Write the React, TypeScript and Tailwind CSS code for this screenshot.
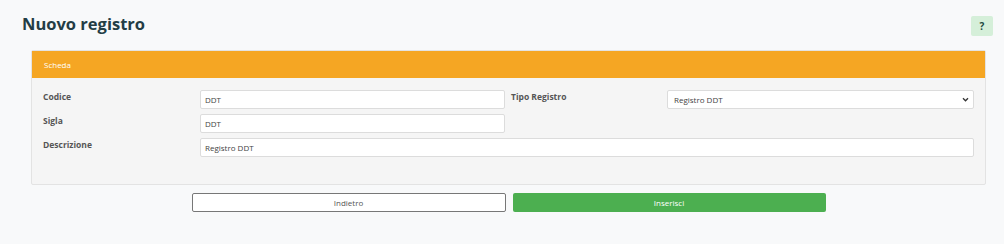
import React from "react";

const font = { fontFamily: '"Open Sans", "Noto Sans", sans-serif' };

export default function App() {
  return (
    <div
      className="w-full h-[244px] bg-[#f8f9fa] pl-[22px] pr-[11px] pt-[12px]"
      style={font}
    >
      {/* Header */}
      <div className="flex items-start justify-between">
        <h1 className="text-[16.5px] leading-[24px] font-bold text-[#233d45]">
          Nuovo registro
        </h1>
        <button className="mt-[4px] w-[22px] h-[20px] rounded-[2px] bg-[#d5efd9] text-[#1f4a40] text-[10px] font-bold flex items-center justify-center">
          ?
        </button>
      </div>

      {/* Card */}
      <div className="ml-[9px] mr-[7px] mt-[14px] border border-[#e3e3e3] rounded-[2px] bg-[#f5f5f5]">
        <div className="h-[27px] bg-[#f5a623] flex items-center px-[12px] text-white text-[8px]">
          Scheda
        </div>
        <div className="px-[11px] pt-[12px] pb-[27px] flex flex-col gap-[5px] text-[8px] text-[#444]">
          <div className="flex items-start">
            <label className="w-[157px] font-bold text-[#555] text-[8.5px] leading-[12px] pt-[1px]">
              Codice
            </label>
            <div className="w-[305px] h-[19px] bg-white border border-[#dcdcdc] rounded-[2px] flex items-center px-[4px]">
              DDT
            </div>
            <label className="w-[162px] pl-[6px] font-bold text-[#555] text-[8.5px] leading-[12px] pt-[1px]">
              Tipo Registro
            </label>
            <div className="flex-1 h-[19px] bg-white border border-[#dcdcdc] rounded-[2px] flex items-center justify-between pl-[6px] pr-[4px]">
              <span>Registro DDT</span>
              <svg width="7" height="5" viewBox="0 0 8 6">
                <path d="M1 1.5 L4 4.5 L7 1.5" fill="none" stroke="#333" strokeWidth="1.6" />
              </svg>
            </div>
          </div>
          <div className="flex items-start">
            <label className="w-[157px] font-bold text-[#555] text-[8.5px] leading-[12px] pt-[1px]">
              Sigla
            </label>
            <div className="w-[305px] h-[19px] bg-white border border-[#dcdcdc] rounded-[2px] flex items-center px-[4px]">
              DDT
            </div>
          </div>
          <div className="flex items-start">
            <label className="w-[157px] font-bold text-[#555] text-[8.5px] leading-[12px] pt-[1px]">
              Descrizione
            </label>
            <div className="flex-1 h-[19px] bg-white border border-[#dcdcdc] rounded-[2px] flex items-center px-[4px]">
              Registro DDT
            </div>
          </div>
        </div>
      </div>

      {/* Actions */}
      <div className="ml-[9px] mr-[7px] mt-[8px] flex justify-center gap-[7px]">
        <button className="w-[314px] h-[19px] bg-white border border-[#777] rounded-[2px] text-[8px] text-[#555]">
          Indietro
        </button>
        <button className="w-[313px] h-[19px] bg-[#4caf50] rounded-[2px] text-[8px] text-white">
          Inserisci
        </button>
      </div>
    </div>
  );
}
